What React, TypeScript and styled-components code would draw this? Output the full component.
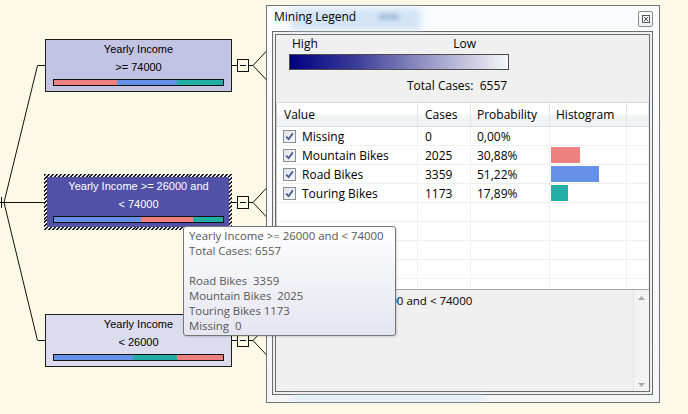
import React from 'react';
import styled, { createGlobalStyle } from 'styled-components';

const GlobalStyle = createGlobalStyle`
  html, body {
    margin: 0;
    padding: 0;
  }
  body {
    background: #fdf9e7;
    font-family: 'Open Sans', 'Noto Sans', sans-serif;
  }
`;

const UI_FONT = `'Open Sans', 'Noto Sans', sans-serif`;
const NODE_FONT = `'Liberation Sans', Arial, sans-serif`;

const RED = '#ef8080';
const BLUE = '#6592e8';
const TEAL = '#22aea4';

const Desktop = styled.div`
  position: relative;
  width: 688px;
  height: 414px;
  overflow: hidden;
  background: #fdf9e7;
`;

/* ---------- decision tree ---------- */

const Connectors = styled.svg`
  position: absolute;
  left: 0;
  top: 0;
`;

type NodeBoxProps = { $top: number; $fill: string; $ink: string };

const NodeBox = styled.div<NodeBoxProps>`
  position: absolute;
  left: 45px;
  top: ${(p) => p.$top}px;
  width: 187px;
  height: 53px;
  box-sizing: border-box;
  border: 1px solid #1c1c1c;
  background: ${(p) => p.$fill};
  color: ${(p) => p.$ink};
  display: flex;
  flex-direction: column;
  align-items: center;
  padding: 0 7px 0 7px;
  font-family: ${NODE_FONT};
  font-size: 11px;
`;

const Hatch = styled.div`
  position: absolute;
  left: 44px;
  top: 174px;
  width: 188px;
  height: 56px;
  box-sizing: border-box;
  padding: 3px;
  background: repeating-linear-gradient(-45deg, #1e1e1e 0px, #1e1e1e 1.4px, #e8e8e8 1.4px, #e8e8e8 2.8px);
`;

const SelectedBody = styled.div`
  width: 100%;
  height: 100%;
  background: #5151a8;
  color: #ffffff;
  display: flex;
  flex-direction: column;
  align-items: center;
  padding: 0 5px 0 6px;
  box-sizing: border-box;
  font-family: ${NODE_FONT};
  font-size: 11px;
`;

const NodeLine = styled.div`
  line-height: 18px;
  white-space: nowrap;
`;

const DistBar = styled.div`
  margin-top: 3px;
  width: 171px;
  height: 7px;
  box-sizing: border-box;
  border: 1px solid #111;
  display: flex;
`;

const Segment = styled.div<{ $share: number; $color: string }>`
  flex: ${(p) => p.$share} 0 0;
  background: ${(p) => p.$color};
`;

type Seg = { share: number; color: string };

function Distribution({ segs }: { segs: Seg[] }) {
  return (
    <DistBar>
      {segs.map((s, i) => (
        <Segment key={i} $share={s.share} $color={s.color} />
      ))}
    </DistBar>
  );
}

function Expander({ cy }: { cy: number }) {
  return (
    <g>
      <path d={`M231 ${cy} H237`} />
      <rect x={237.5} y={cy - 6} width={11} height={12} fill="#fdf9e7" />
      <path d={`M240 ${cy} H246`} />
      <path d={`M249 ${cy} H253 L267 ${cy - 15}`} />
      <path d={`M253 ${cy} L267 ${cy + 15}`} />
    </g>
  );
}

/* ---------- mining legend window ---------- */

const LegendWindow = styled.div`
  position: absolute;
  left: 266px;
  top: 5px;
  width: 394px;
  height: 398px;
  box-sizing: border-box;
  border: 1px solid #727272;
  background: linear-gradient(#fbfcfd, #f4f6f8);
  display: flex;
  flex-direction: column;
  padding: 0 6px 7px 5px;
  font-family: ${UI_FONT};
  font-size: 11.5px;
  color: #000;
`;

const Glow = styled.div<{ $left: number; $top: number; $w: number; $h: number }>`
  position: absolute;
  left: ${(p) => p.$left}px;
  top: ${(p) => p.$top}px;
  width: ${(p) => p.$w}px;
  height: ${(p) => p.$h}px;
  background: #c9e0f6;
  filter: blur(3px);
  opacity: 0.8;
`;

const GhostMark = styled.div`
  position: absolute;
  left: 112px;
  top: 8px;
  width: 20px;
  height: 6px;
  background: #8aa6c8;
  filter: blur(2px);
  opacity: 0.6;
`;

const TitleBar = styled.div`
  position: relative;
  height: 25px;
  flex: none;
  display: flex;
  align-items: center;
  justify-content: space-between;
  padding: 0 0 3px 2px;
  box-sizing: border-box;
`;

const Title = styled.span`
  position: relative;
  font-size: 12px;
  line-height: 16px;
`;

const CloseButton = styled.div`
  position: relative;
  width: 15px;
  height: 16px;
  margin-top: 4px;
  box-sizing: border-box;
  border: 1px solid #8b8b8b;
  border-radius: 2px;
  background: linear-gradient(#ffffff, #eef0f2);
  display: flex;
  align-items: center;
  justify-content: center;
`;

const InnerPanel = styled.div`
  flex: 1;
  display: flex;
  flex-direction: column;
  border: 4px double #6c6c6c;
  background: #f0f0f0;
  min-height: 0;
`;

const ScaleSection = styled.div`
  height: 67px;
  flex: none;
  display: flex;
  flex-direction: column;
  padding-top: 1px;
  box-sizing: border-box;
`;

const ScaleLabels = styled.div`
  margin-left: 13px;
  width: 220px;
  display: flex;
  justify-content: space-between;
  padding: 0 33px 0 3px;
  box-sizing: border-box;
  line-height: 16px;
  font-size: 12px;
`;

const Gradient = styled.div`
  margin: 2px 0 0 13px;
  width: 220px;
  height: 16px;
  box-sizing: border-box;
  border: 1px solid #4d4d4d;
  background: linear-gradient(90deg, #000080 0%, #3b3b9a 30%, #9c9cc8 65%, #f6f6fa 100%);
`;

const TotalLine = styled.div`
  margin: 8px 0 0 131px;
  line-height: 16px;
  font-size: 12px;
`;

const ListView = styled.div`
  height: 186px;
  flex: none;
  background: #fff;
  border-top: 1px solid #d9d9d9;
  border-left: 1px solid #c9c9c9;
  overflow: hidden;
`;

const COLS = '141px 53px 79px 77px 1fr';

const HeaderRow = styled.div`
  display: grid;
  grid-template-columns: ${COLS};
  height: 24px;
  background: linear-gradient(#ffffff 0%, #ffffff 45%, #f3f4f6 55%, #f1f2f4 100%);
  border-bottom: 1px solid #dcdde0;
  box-sizing: border-box;
`;

const HeaderCell = styled.div<{ $pad: number }>`
  display: flex;
  align-items: center;
  padding-left: ${(p) => p.$pad}px;
  border-right: 1px solid #e2e3e6;
  font-size: 12px;
`;

const Row = styled.div`
  display: grid;
  grid-template-columns: ${COLS};
  height: 19px;
  box-sizing: border-box;
  border-bottom: 1px solid #f0f0f0;
`;

const Cell = styled.div<{ $pad: number }>`
  display: flex;
  align-items: center;
  gap: 6px;
  padding-left: ${(p) => p.$pad}px;
  border-right: 1px solid #f0f0f0;
  white-space: nowrap;
  font-size: 12px;
`;

const CheckBox = styled.div`
  width: 13px;
  height: 13px;
  box-sizing: border-box;
  border: 1px solid #8e8f8f;
  background: linear-gradient(135deg, #dfe3ea, #f7f8fa);
  display: flex;
  align-items: center;
  justify-content: center;
  flex: none;
`;

const HistBar = styled.div<{ $w: number; $color: string }>`
  width: ${(p) => p.$w}px;
  height: 16px;
  margin-left: -5px;
  background: ${(p) => p.$color};
`;

const DetailPane = styled.div`
  flex: 1;
  display: flex;
  border-top: 1px solid #a9a9a9;
  background: #f0f0f0;
  min-height: 0;
`;

const DetailText = styled.div`
  flex: 1;
  padding: 3px 0 0 0;
  line-height: 16px;
  font-size: 11.5px;
  white-space: nowrap;
`;

const ScrollBar = styled.div`
  width: 16px;
  display: flex;
  flex-direction: column;
  justify-content: space-between;
  align-items: center;
  padding: 6px 0 4px;
  box-sizing: border-box;
  background: #f3f3f3;
  border-left: 1px solid #e4e4e4;
`;

/* ---------- tooltip ---------- */

const Tooltip = styled.div`
  position: absolute;
  left: 183px;
  top: 226px;
  width: 213px;
  height: 110px;
  box-sizing: border-box;
  padding: 1px 5px;
  border: 1px solid #767676;
  border-radius: 3px;
  background: linear-gradient(#ffffff, #e4e5f0);
  box-shadow: 1px 1px 2px rgba(0, 0, 0, 0.15);
  color: #575757;
  font-family: ${UI_FONT};
  font-size: 11.4px;
  line-height: 15px;
  white-space: pre;
`;

type Category = { name: string; cases: string; prob: string; bar: number; color: string };

const categories: Category[] = [
  { name: 'Missing', cases: '0', prob: '0,00%', bar: 0, color: 'transparent' },
  { name: 'Mountain Bikes', cases: '2025', prob: '30,88%', bar: 29, color: RED },
  { name: 'Road Bikes', cases: '3359', prob: '51,22%', bar: 48, color: BLUE },
  { name: 'Touring Bikes', cases: '1173', prob: '17,89%', bar: 17, color: TEAL },
];

function Check() {
  return (
    <svg width="9" height="9" viewBox="0 0 9 9">
      <path d="M1.2 4.6 L3.6 7.2 L7.8 1.4" fill="none" stroke="#4a5c8f" strokeWidth="1.8" />
    </svg>
  );
}

export default function App() {
  const emptyRows = [0, 1, 2, 3, 4];

  return (
    <Desktop>
      <GlobalStyle />

      <Connectors width="688" height="414">
        <g stroke="#111" strokeWidth="1" fill="none" shapeRendering="crispEdges">
          <path d="M1.5 197 V208" />
          <path d="M0 202.5 H45" />
          <path d="M37.5 65.5 H45" />
          <path d="M37.5 340.5 H45" />
        </g>
        <g stroke="#111" strokeWidth="1" fill="none">
          <path d="M4 202.5 L37.5 65.5" />
          <path d="M4 202.5 L37.5 340.5" />
          <Expander cy={65.5} />
          <Expander cy={202.5} />
          <Expander cy={340.5} />
        </g>
      </Connectors>

      <NodeBox $top={39} $fill="#c3c4e3" $ink="#000">
        <NodeLine>Yearly Income</NodeLine>
        <NodeLine>&gt;= 74000</NodeLine>
        <Distribution
          segs={[
            { share: 37, color: RED },
            { share: 36, color: BLUE },
            { share: 27, color: TEAL },
          ]}
        />
      </NodeBox>

      <Hatch>
        <SelectedBody>
          <NodeLine>Yearly Income &gt;= 26000 and</NodeLine>
          <NodeLine>&lt; 74000</NodeLine>
          <Distribution
            segs={[
              { share: 51.2, color: BLUE },
              { share: 30.9, color: RED },
              { share: 17.9, color: TEAL },
            ]}
          />
        </SelectedBody>
      </Hatch>

      <NodeBox $top={314} $fill="#dcdcef" $ink="#000">
        <NodeLine>Yearly Income</NodeLine>
        <NodeLine>&lt; 26000</NodeLine>
        <Distribution
          segs={[
            { share: 47, color: BLUE },
            { share: 26, color: TEAL },
            { share: 27, color: RED },
          ]}
        />
      </NodeBox>

      <LegendWindow>
        <Glow $left={24} $top={2} $w={130} $h={22} />
        <GhostMark />
        <Glow $left={26} $top={390} $w={190} $h={4} />
        <TitleBar>
          <Title>Mining Legend</Title>
          <CloseButton>
            <svg width="8" height="8" viewBox="0 0 8 8">
              <rect x="0.5" y="0.5" width="7" height="7" fill="none" stroke="#555" strokeWidth="1" />
              <path d="M2 2 L6 6 M6 2 L2 6" stroke="#555" strokeWidth="1" />
            </svg>
          </CloseButton>
        </TitleBar>

        <InnerPanel>
          <ScaleSection>
            <ScaleLabels>
              <span>High</span>
              <span>Low</span>
            </ScaleLabels>
            <Gradient />
            <TotalLine>Total Cases:&nbsp; 6557</TotalLine>
          </ScaleSection>

          <ListView>
            <HeaderRow>
              <HeaderCell $pad={7}>Value</HeaderCell>
              <HeaderCell $pad={7}>Cases</HeaderCell>
              <HeaderCell $pad={6}>Probability</HeaderCell>
              <HeaderCell $pad={6}>Histogram</HeaderCell>
              <HeaderCell $pad={0} />
            </HeaderRow>
            {categories.map((c) => (
              <Row key={c.name}>
                <Cell $pad={6}>
                  <CheckBox>
                    <Check />
                  </CheckBox>
                  {c.name}
                </Cell>
                <Cell $pad={7}>{c.cases}</Cell>
                <Cell $pad={6}>{c.prob}</Cell>
                <Cell $pad={6}>{c.bar > 0 && <HistBar $w={c.bar} $color={c.color} />}</Cell>
                <Cell $pad={0} />
              </Row>
            ))}
            {emptyRows.map((r) => (
              <Row key={r}>
                <Cell $pad={0} />
                <Cell $pad={0} />
                <Cell $pad={0} />
                <Cell $pad={0} />
                <Cell $pad={0} />
              </Row>
            ))}
          </ListView>

          <DetailPane>
            <DetailText>Yearly Income &gt;= 26000 and &lt; 74000</DetailText>
            <ScrollBar>
              <svg width="7" height="4" viewBox="0 0 7 4">
                <path d="M0 4 L3.5 0 L7 4 Z" fill="#a8a8a8" />
              </svg>
              <svg width="7" height="4" viewBox="0 0 7 4">
                <path d="M0 0 L3.5 4 L7 0 Z" fill="#a8a8a8" />
              </svg>
            </ScrollBar>
          </DetailPane>
        </InnerPanel>
      </LegendWindow>

      <Tooltip>
        {'Yearly Income >= 26000 and < 74000\nTotal Cases: 6557\n\nRoad Bikes  3359\nMountain Bikes  2025\nTouring Bikes 1173\nMissing  0'}
      </Tooltip>
    </Desktop>
  );
}
